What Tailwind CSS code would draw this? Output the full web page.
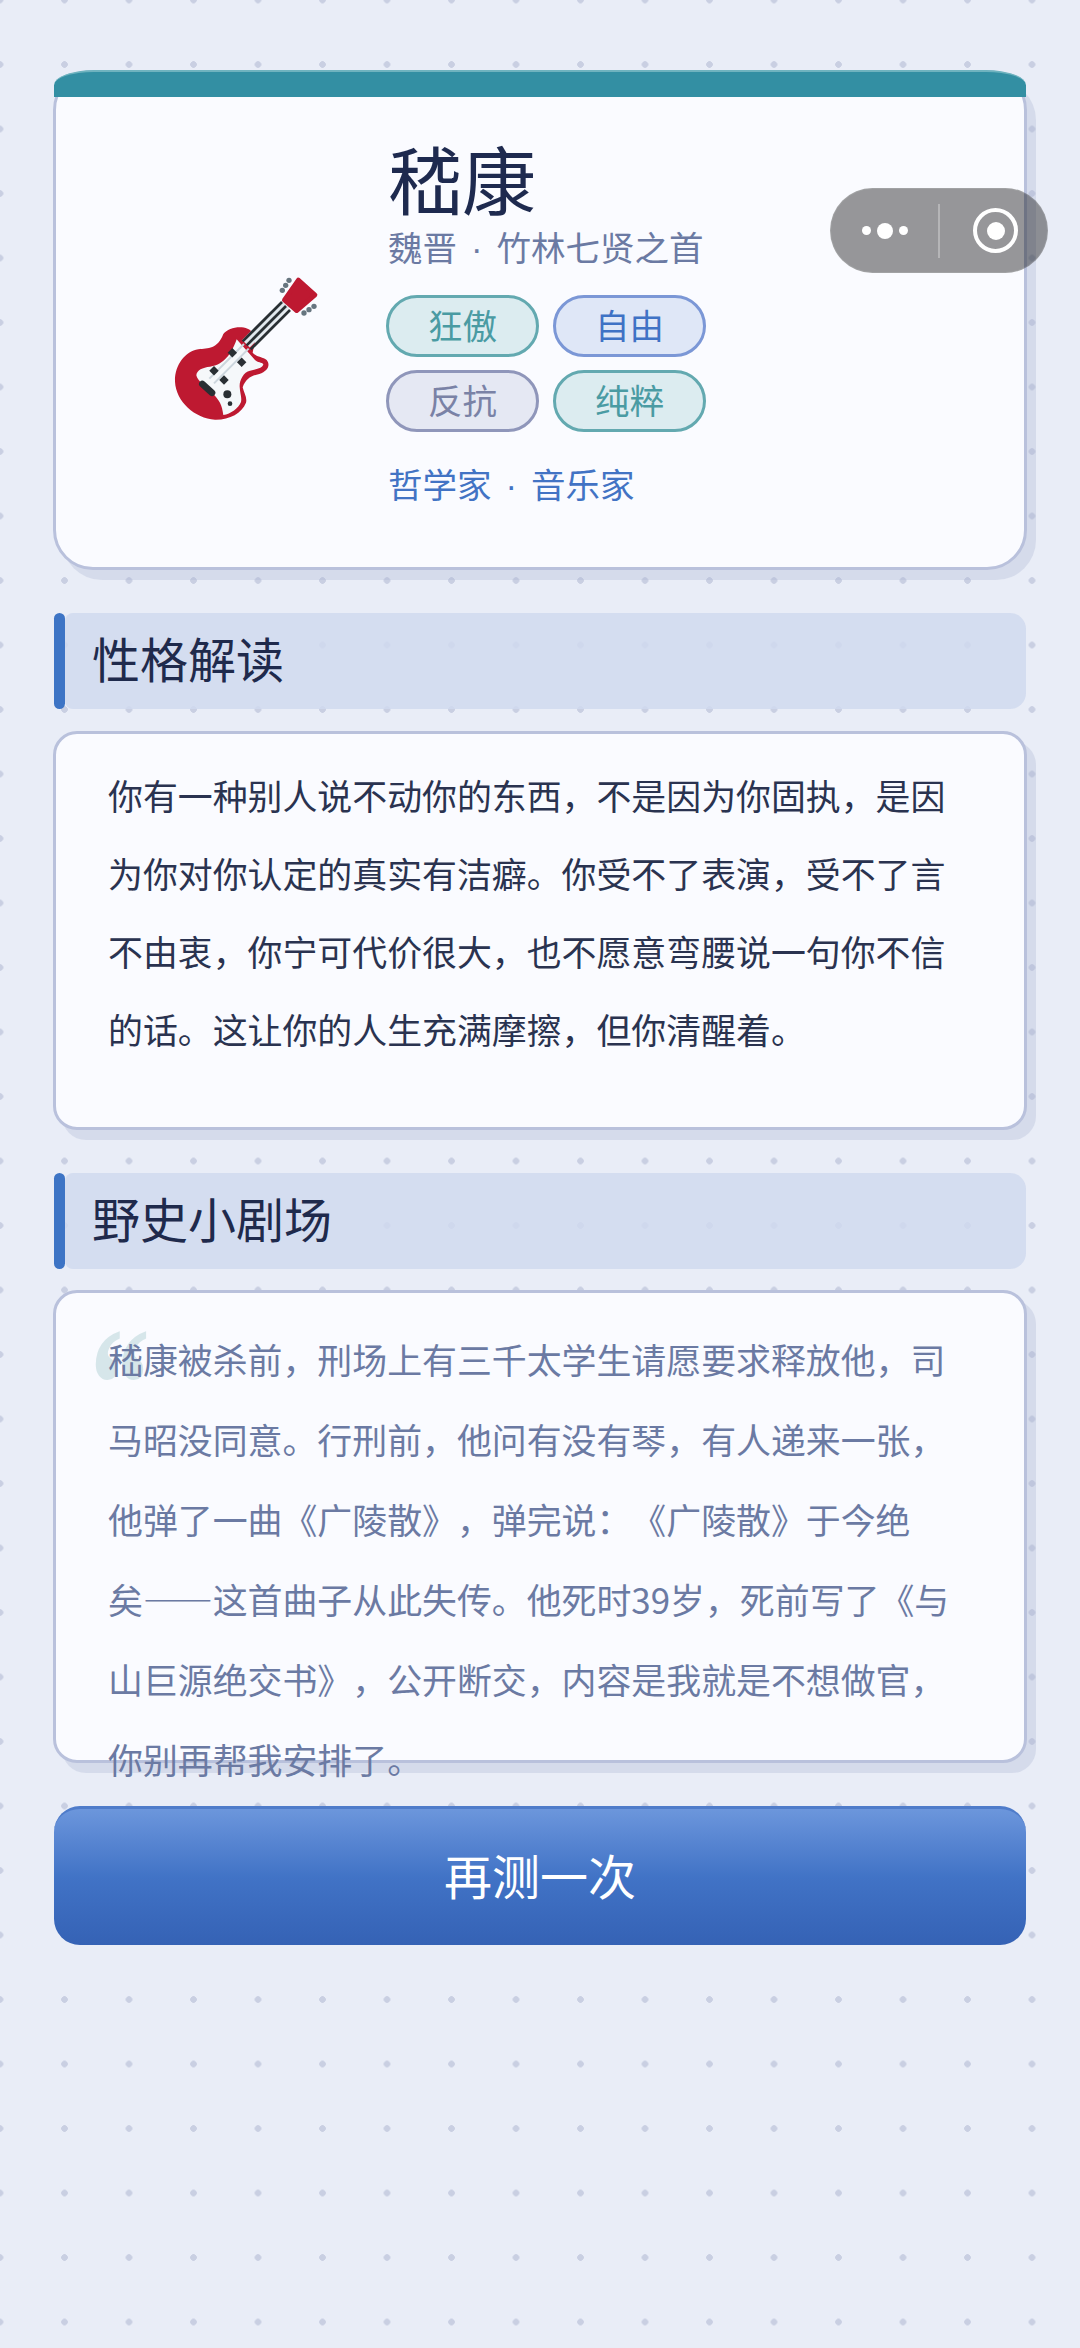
<!DOCTYPE html>
<html lang="zh-CN">
<head>
    <meta charset="UTF-8">
    <meta name="viewport" content="width=device-width, initial-scale=1.0">
    <title>嵇康</title>
    <script src="https://cdn.jsdelivr.net/npm/@tailwindcss/browser@4"></script>
</head>
<body class="relative h-[2348px] overflow-hidden bg-[#e9edf7] bg-[radial-gradient(circle,#c9cfe2_3px,transparent_3.6px)] bg-size-[64.5px_64.5px] bg-position-[-32.25px_-32.25px] font-['Noto_Sans_CJK_SC',sans-serif] [text-spacing-trim:space-all]">
    <main class="px-[54px] pt-[70px]">
        <!-- hero card -->
        <section class="relative -mx-[1px] flex h-[500px] rounded-[40px] border-[3px] border-[#b9c1dc] bg-[#fafbff] shadow-[9px_10px_0_rgba(170,180,210,0.3)]">
            <div class="absolute -left-[2px] -right-[2px] -top-[3px] h-[27px] rounded-t-[40px_15px] bg-[#338fa3] border-t-[2px] border-[#6fb3bf]"></div>
            <svg class="ml-[84px] mt-[177px] h-[190px] w-[180px] shrink-0" viewBox="0 0 540 570">
                <path fill="#be1931" d="M250 252C268 228 322 222 340 250C352 270 340 292 338 308C350 322 368 320 380 330C392 345 384 362 358 372C332 378 318 386 308 412C312 430 322 442 318 458C305 490 268 510 225 509C165 505 108 455 105 395C104 345 135 305 175 298C205 294 232 298 250 252Z"/>
                <path fill="#f5f8fa" d="M290 268L345 330C352 338 366 336 370 343C368 354 350 358 330 362C310 366 298 392 299 410C300 430 306 442 303 456C296 474 272 492 250 495C246 465 240 452 212 424C195 408 172 392 169 376C170 360 188 352 210 350C242 346 270 325 290 268Z"/>
                <g stroke="#ccd6dd" stroke-width="6">
                    <path d="M312 282L208 386"/>
                    <path d="M326 296L222 400"/>
                </g>
                <g fill="#292f33">
                    <rect x="267" y="298" width="20" height="20" transform="rotate(45 277 308)"/>
                    <rect x="295" y="327" width="20" height="20" transform="rotate(45 305 337)"/>
                    <rect x="212" y="352" width="20" height="20" transform="rotate(45 222 362)"/>
                    <rect x="242" y="380" width="20" height="20" transform="rotate(45 252 390)"/>
                    <circle cx="262" cy="433" r="12"/>
                    <circle cx="270" cy="461" r="7"/>
                </g>
                <path d="M187 402L216 428" stroke="#292f33" stroke-width="20" stroke-linecap="round"/>
                <path d="M439 160L318 281" stroke="#e1e8ed" stroke-width="32"/>
                <g stroke="#292f33" stroke-width="8">
                    <path d="M426 156L308 274"/>
                    <path d="M438 168L320 286"/>
                    <path d="M450 180L332 298"/>
                </g>
                <path fill="#be1931" stroke="#be1931" stroke-width="14" stroke-linejoin="round" d="M475 90L525 135L470 182L433 150Z"/>
                <g fill="#66757f">
                    <circle cx="427" cy="121" r="8"/>
                    <circle cx="437" cy="106" r="8"/>
                    <circle cx="447" cy="91" r="8"/>
                    <circle cx="492" cy="189" r="8"/>
                    <circle cx="507" cy="179" r="8"/>
                    <circle cx="522" cy="169" r="8"/>
                </g>
            </svg>
            <div class="ml-[68px] mt-[67px] flex flex-col">
                <h1 class="h-[83px] text-[74px] leading-[74px] text-[#1e2a4f]">嵇康</h1>
                <p class="text-[34.5px] leading-[46px] text-[#6b7aa3]">魏晋<span class="mx-[14px] font-['Liberation_Sans',sans-serif]">·</span>竹林七贤之首</p>
                <div class="-ml-[2px] mt-[23px] grid w-[320px] grid-cols-[153px_153px] gap-x-[14px] gap-y-[13px] text-[34.5px]">
                    <span class="flex h-[62px] items-center justify-center rounded-full border-[3px] border-[#63a9b0] bg-[#dcecf0] pb-[2px] text-[#4a9ba3]">狂傲</span>
                    <span class="flex h-[62px] items-center justify-center rounded-full border-[3px] border-[#7b97d6] bg-[#dfe7f7] pb-[2px] text-[#3f72c5]">自由</span>
                    <span class="flex h-[62px] items-center justify-center rounded-full border-[3px] border-[#8f96ba] bg-[#e5e8f3] pb-[2px] text-[#7a82a6]">反抗</span>
                    <span class="flex h-[62px] items-center justify-center rounded-full border-[3px] border-[#63a9b0] bg-[#dcecf0] pb-[2px] text-[#4a9ba3]">纯粹</span>
                </div>
                <p class="mt-[28px] text-[34.5px] leading-[46px] text-[#4273c4]">哲学家<span class="mx-[14px] font-['Liberation_Sans',sans-serif]">·</span>音乐家</p>
            </div>
        </section>

        <!-- personality -->
        <div class="mt-[43px] flex h-[96px]">
            <div class="w-[11px] shrink-0 rounded-full bg-[#3d74c5]"></div>
            <h2 class="flex flex-1 items-center rounded-r-[16px] rounded-l-[8px] bg-[#d0d9ee]/85 pb-[8px] pl-[27px] text-[48px] text-[#1f2a4c]">性格解读</h2>
        </div>
        <section class="-mx-[1px] mt-[22px] h-[399px] rounded-[24px] border-[3px] border-[#b9c1dc] bg-[#fafbff] pl-[52px] pt-[22px] text-[34.9px] leading-[78px] whitespace-nowrap text-[#2a3350] shadow-[9px_10px_0_rgba(170,180,210,0.3)]">
            你有一种别人说不动你的东西，不是因为你固执，是因<br>
            为你对你认定的真实有洁癖。你受不了表演，受不了言<br>
            不由衷，你宁可代价很大，也不愿意弯腰说一句你不信<br>
            的话。这让你的人生充满摩擦，但你清醒着。
        </section>

        <!-- story -->
        <div class="mt-[43px] flex h-[96px]">
            <div class="w-[11px] shrink-0 rounded-full bg-[#3d74c5]"></div>
            <h2 class="flex flex-1 items-center rounded-r-[16px] rounded-l-[8px] bg-[#d0d9ee]/85 pb-[8px] pl-[27px] text-[48px] text-[#1f2a4c]">野史小剧场</h2>
        </div>
        <section class="relative -mx-[1px] mt-[21px] h-[473px] rounded-[24px] border-[3px] border-[#b9c1dc] bg-[#fafbff] pl-[52px] pt-[26px] text-[34.9px] leading-[80px] whitespace-nowrap text-[#6b7aa3] shadow-[9px_10px_0_rgba(170,180,210,0.3)]">
            <span class="absolute left-[34px] top-[24px] origin-top scale-y-[1.35] font-['Liberation_Serif',serif] text-[120px] font-bold leading-[100px] text-[#d6e6ea]">“</span>
            <p class="relative">嵇康被杀前，刑场上有三千太学生请愿要求释放他，司<br>
            马昭没同意。行刑前，他问有没有琴，有人递来一张，<br>
            他弹了一曲《广陵散》，弹完说：《广陵散》于今绝<br>
            矣——这首曲子从此失传。他死时39岁，死前写了《与<br>
            山巨源绝交书》，公开断交，内容是我就是不想做官，<br>
            你别再帮我安排了。</p>
        </section>

        <button class="mt-[43px] flex h-[139px] w-full items-center justify-center rounded-[26px] border-t-[3px] border-[#4f7cca] bg-linear-to-b from-[#6c96dc] via-[#4173c6] to-[#3562b5] pb-[6px] text-[48px] text-white">再测一次</button>
    </main>

    <!-- wechat capsule -->
    <div class="absolute left-[830px] top-[188px] flex h-[85px] w-[218px] items-center rounded-full border border-white/10 bg-black/40">
        <div class="ml-[31px] flex w-[46px] items-center justify-between">
            <span class="h-[9px] w-[9px] rounded-full bg-white"></span>
            <span class="h-[16px] w-[16px] rounded-full bg-white"></span>
            <span class="h-[9px] w-[9px] rounded-full bg-white"></span>
        </div>
        <span class="ml-[30px] h-[54px] w-[2px] bg-white/30"></span>
        <span class="ml-[33px] flex h-[45px] w-[45px] items-center justify-center rounded-full border-[4px] border-white">
            <span class="h-[18px] w-[18px] rounded-full bg-white"></span>
        </span>
    </div>
</body>
</html>
